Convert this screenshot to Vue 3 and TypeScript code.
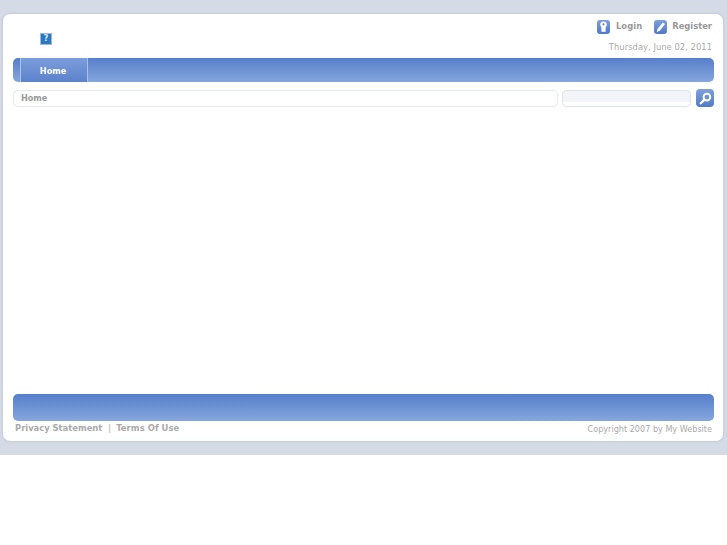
<script setup lang="ts">
const footerLinks: string[] = ['Privacy Statement', 'Terms Of Use']
</script>

<template>
  <div class="page">
    <div class="card">
      <header class="head">
        <div class="logo-cell">
          <span class="broken" aria-label="missing image">?</span>
        </div>
        <div class="head-right">
          <div class="user">
            <a class="user-link">
              <svg class="ico" width="13" height="14" viewBox="0 0 13 14">
                <defs>
                  <linearGradient id="ug" x1="0" y1="0" x2="0" y2="1">
                    <stop offset="0" stop-color="#7f9fd8" />
                    <stop offset="1" stop-color="#4f79c6" />
                  </linearGradient>
                </defs>
                <rect x="0" y="0" width="13" height="14" rx="3" fill="url(#ug)" />
                <circle cx="6.5" cy="4.6" r="3.2" fill="#fff" />
                <path d="M4.4 5.5h4.2v6.3H4.4z" fill="#fff" />
                <circle cx="6.5" cy="4.3" r="1.1" fill="#5c83cb" />
              </svg>
              <span class="login">Login</span>
            </a>
            <a class="user-link user-link--tight">
              <svg class="ico" width="13" height="14" viewBox="0 0 13 14">
                <rect x="0" y="0" width="13" height="14" rx="3" fill="url(#ug)" />
                <path d="M8.8 2.4l2.2 1.7-5.2 6.7-3 1.1.7-3z" fill="#fff" />
              </svg>
              <span class="register">Register</span>
            </a>
          </div>
          <div class="date">Thursday, June 02, 2011</div>
        </div>
      </header>

      <nav class="bar nav">
        <a class="tab">Home</a>
      </nav>

      <div class="crumbs">
        <div class="crumb">Home</div>
        <div class="search-box"></div>
        <button class="search-btn" aria-label="Search">
          <svg width="13" height="13" viewBox="0 0 12 12">
            <circle cx="7.3" cy="4.7" r="3.1" fill="none" stroke="#fff" stroke-width="1.8" />
            <path d="M5 7L1.6 10.4" stroke="#fff" stroke-width="2.2" stroke-linecap="round" />
          </svg>
        </button>
      </div>

      <main class="content"></main>

      <div class="bar foot-bar"></div>

      <footer class="foot">
        <div class="links">
          <a class="privacy">{{ footerLinks[0] }}</a>
          <span class="sep">|</span>
          <a class="terms">{{ footerLinks[1] }}</a>
        </div>
        <div class="copy">Copyright 2007 by My Website</div>
      </footer>
    </div>
  </div>
</template>

<style>
html, body { margin: 0; background: #fff; }
</style>

<style scoped>
.page {
  width: 727px;
  height: 455px;
  box-sizing: border-box;
  padding: 14px 4px 14px 3px;
  background: #d5dbe6;
  font-family: "DejaVu Sans", sans-serif;
  font-size: 8.4px;
  color: #999;
}
.card {
  height: 427px;
  box-sizing: border-box;
  padding: 0 9px 0 10px;
  background: #fff;
  border-radius: 7px;
  box-shadow: 0 0 3px #b4bccb;
  display: flex;
  flex-direction: column;
}
.head {
  height: 44px;
  flex: none;
  display: flex;
  justify-content: space-between;
}
.logo-cell { padding: 19px 0 0 27px; }
.broken {
  display: block;
  width: 10px;
  height: 10px;
  border: 1px solid #9fb9dc;
  background: #2a78bd;
  color: #dfeaf6;
  font-size: 8px;
  font-weight: 700;
  line-height: 10px;
  text-align: center;
}
.head-right {
  padding: 6px 2px 0 0;
  display: flex;
  flex-direction: column;
  align-items: flex-end;
}
.user { display: flex; gap: 12px; }
.user-link {
  display: flex;
  align-items: center;
  gap: 6px;
  font-weight: 700;
  color: #999;
  height: 14px;
}
.user-link--tight { gap: 5px; }
.login { letter-spacing: 0.08px; margin-top: -3px; }
.register { margin-top: -3px; }
.date {
  margin-top: 7px;
  color: #aaa;
  line-height: 12px;
  letter-spacing: 0.03px;
}
.bar {
  background: linear-gradient(#567ecb, #86a7dc);
  border-radius: 5px;
}
.nav {
  height: 24px;
  flex: none;
  padding-left: 7px;
  display: flex;
}
.tab {
  width: 68px;
  box-sizing: border-box;
  padding-right: 2px;
  border-left: 1px solid #a9c1e8;
  border-right: 1px solid #a9c1e8;
  background: linear-gradient(#7b9ddb, #5b82cb);
  color: #fff;
  font-size: 8.1px;
  font-weight: 700;
  text-align: center;
  line-height: 27px;
}
.crumbs {
  margin-top: 8px;
  height: 17px;
  display: flex;
  align-items: stretch;
  flex: none;
}
.crumb {
  width: 545px;
  box-sizing: border-box;
  border: 1px solid #e6e9ee;
  box-shadow: 0 0 1px #e6e9ee;
  border-radius: 5px;
  padding-left: 7px;
  font-size: 8.1px;
  font-weight: 700;
  color: #999;
  line-height: 15px;
}
.search-box {
  width: 129px;
  margin-left: 4px;
  box-sizing: border-box;
  border: 1px solid #e0e3e9;
  box-shadow: 0 0 1px #e0e3e9;
  border-radius: 5px;
  background: linear-gradient(#f2f4f8 70%, #fff 70%);
}
.search-btn {
  width: 18px;
  height: 18px;
  margin: -1px 0 0 5px;
  padding: 0;
  border: 0;
  border-radius: 4px;
  background: linear-gradient(#7f9fd8, #517bc8);
  display: flex;
  align-items: center;
  justify-content: center;
}
.content { flex: 1; }
.foot-bar { height: 27px; flex: none; }
.foot {
  height: 20px;
  flex: none;
  padding: 0 2px;
  display: flex;
  justify-content: space-between;
}
.links {
  font-weight: 700;
  color: #aaa;
  line-height: 15px;
}
.terms { letter-spacing: 0.08px; }
.sep { font-weight: 400; margin: 0 5px 0 6px; }
.copy {
  color: #aaa;
  font-size: 8.1px;
  line-height: 16px;
}
</style>
